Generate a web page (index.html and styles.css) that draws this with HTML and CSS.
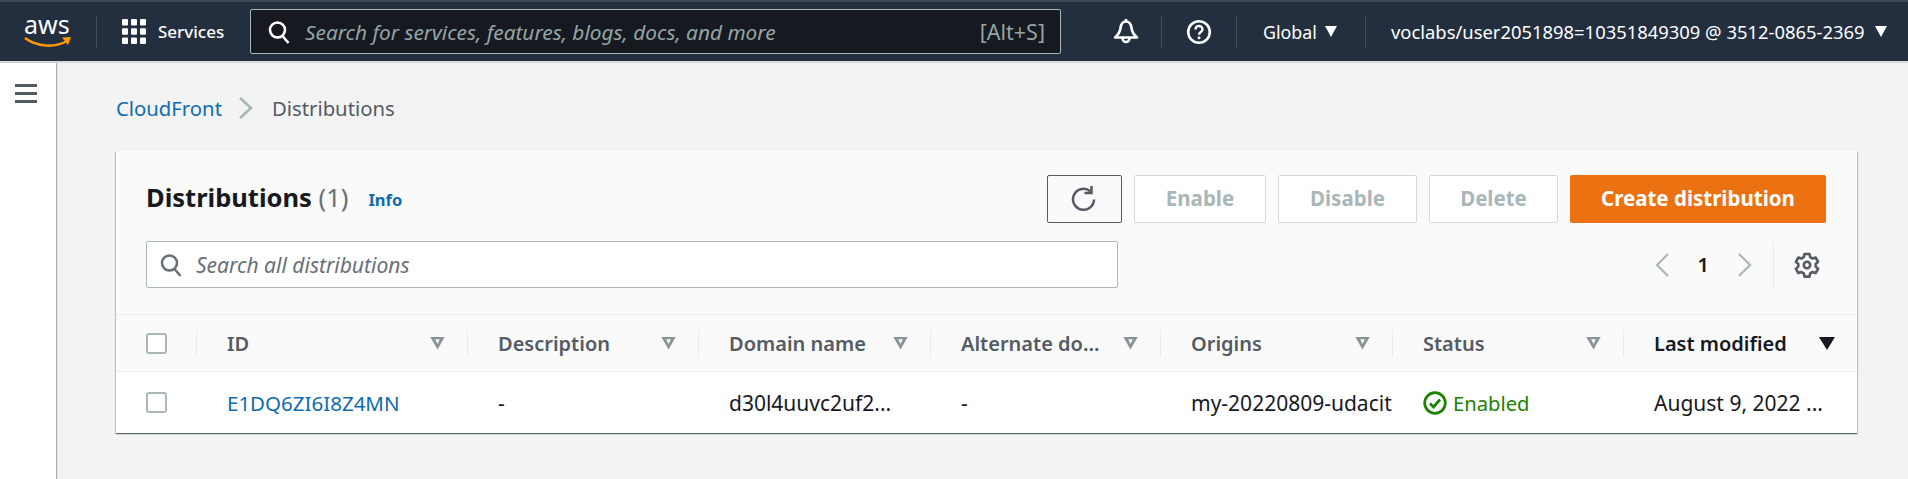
FILE: index.html
```html
<!DOCTYPE html>
<html lang="en">
<head>
  <meta charset="UTF-8" />
  <title>CloudFront Distributions</title>
  <link rel="stylesheet" href="styles.css">
</head>
<body>
  <header class="topbar">
    <div class="logo">
      <span class="logo-text">aws</span>
      <svg class="logo-smile" width="48" height="12" viewBox="0 0 48 12"><path d="M1 2c12 9 30 10 42 3" fill="none" stroke="#f90" stroke-width="2.6"/><path d="M38 1.500l9-.5-3 8z" fill="#f90"/></svg>
    </div>
    <div class="divider"></div>
    <div class="services">
      <svg width="24" height="25" viewBox="0 0 24 25" fill="#fff">
        <rect x="0" y="0" width="6" height="6.500" rx="1"/><rect x="9" y="0" width="6" height="6.500" rx="1"/><rect x="18" y="0" width="6" height="6.500" rx="1"/>
        <rect x="0" y="9.250" width="6" height="6.500" rx="1"/><rect x="9" y="9.250" width="6" height="6.500" rx="1"/><rect x="18" y="9.250" width="6" height="6.500" rx="1"/>
        <rect x="0" y="18.500" width="6" height="6.500" rx="1"/><rect x="9" y="18.500" width="6" height="6.500" rx="1"/><rect x="18" y="18.500" width="6" height="6.500" rx="1"/>
      </svg>
      <span>Services</span>
    </div>
    <div class="global-search">
      <svg width="22" height="24" viewBox="0 0 22 24" fill="none" stroke="#fff" stroke-width="2.600"><circle cx="9.500" cy="10" r="7.500"/><path d="M14.500 16l6 7"/></svg>
      <span class="global-placeholder">Search for services, features, blogs, docs, and more</span>
      <span class="shortcut">[Alt+S]</span>
    </div>
    <div class="tool bell">
      <svg width="26" height="27" viewBox="0 0 26 27" fill="none" stroke="#fff" stroke-width="2.600" stroke-linejoin="round"><path d="M13 3.500c-3.500 0-5 3-5.500 6.500-.5 4-2.500 7-5.500 9.500h22c-3-2.500-5-5.500-5.500-9.500-.5-3.500-2-6.500-5.500-6.500z"/><path d="M13 1v2"/><path d="M9.500 20a3.500 4 0 0 0 7 0"/></svg>
    </div>
    <div class="divider"></div>
    <div class="tool help">
      <svg width="26" height="26" viewBox="0 0 26 26" fill="none" stroke="#fff"><circle cx="13" cy="13" r="10.800" stroke-width="2.600"/><path d="M9.500 10.500c0-2.200 1.600-3.500 3.500-3.500s3.500 1.300 3.500 3.200c0 2.800-3.500 2.800-3.500 5.600" stroke-width="2.300"/><circle cx="13" cy="18.800" r="1.500" fill="#fff" stroke="none"/></svg>
    </div>
    <div class="divider"></div>
    <div class="menu region"><span>Global</span><i class="caret"></i></div>
    <div class="divider"></div>
    <div class="menu account"><span>voclabs/user2051898=10351849309 @ 3512-0865-2369</span><i class="caret"></i></div>
  </header>

  <div class="layout">
    <aside class="sidenav">
      <div class="hamburger"><i></i><i></i><i></i></div>
    </aside>
    <main class="content">
      <nav class="crumbs">
        <a href="#">CloudFront</a>
        <svg width="16" height="24" viewBox="0 0 16 24" fill="none" stroke="#aab7b8" stroke-width="2.600"><path d="M2 2l11 10L2 22"/></svg>
        <span>Distributions</span>
      </nav>

      <section class="card">
        <div class="card-head">
          <div class="head-row">
            <h1 class="title">Distributions <span class="count">(1)</span></h1>
            <a class="info" href="#">Info</a>
            <div class="actions">
              <button class="btn btn-refresh">
                <svg width="26" height="28" viewBox="0 0 26 28" fill="none" stroke="#545b64" stroke-width="2.500"><path d="M20.500 6.500a10.500 10.500 0 1 0 3.500 8"/><path d="M21.500 1v7h-7"/></svg>
              </button>
              <button class="btn btn-enable" disabled>Enable</button>
              <button class="btn btn-disable" disabled>Disable</button>
              <button class="btn btn-delete" disabled>Delete</button>
              <button class="btn btn-primary">Create distribution</button>
            </div>
          </div>
          <div class="filter-row">
            <div class="filter">
              <svg width="22" height="24" viewBox="0 0 22 24" fill="none" stroke="#687078" stroke-width="2.600"><circle cx="9.500" cy="10" r="7.500"/><path d="M14.500 16l6 7"/></svg>
              <span>Search all distributions</span>
            </div>
            <div class="pager">
              <svg width="14" height="26" viewBox="0 0 14 26" fill="none" stroke="#aab7b8" stroke-width="2.200"><path d="M13 2L2 13l11 11"/></svg>
              <span class="page-num">1</span>
              <svg width="14" height="26" viewBox="0 0 14 26" fill="none" stroke="#aab7b8" stroke-width="2.200"><path d="M1 2l11 11L1 24"/></svg>
            </div>
            <div class="prefs">
              <svg width="26" height="26" viewBox="0 0 26 26" fill="none" stroke="#545b64" stroke-width="2.600" stroke-linejoin="round"><path d="M10.500 2h5l.7 3.200 2.300 1.300 3.100-1 2.500 4.300-2.400 2.200v2.600l2.400 2.200-2.500 4.300-3.100-1-2.300 1.300-.7 3.200h-5l-.7-3.200-2.300-1.300-3.100 1-2.500-4.300 2.400-2.200v-2.600L1.900 9.800l2.500-4.300 3.100 1 2.300-1.300z"/><circle cx="13" cy="13" r="3.200"/></svg>
            </div>
          </div>
        </div>

        <div class="table">
          <div class="tr thead">
            <div class="cell cell-check"><i class="checkbox"></i></div>
            <div class="cell"><span class="label">ID</span><i class="sort"></i></div>
            <div class="cell"><span class="label">Description</span><i class="sort"></i></div>
            <div class="cell"><span class="label">Domain name</span><i class="sort"></i></div>
            <div class="cell"><span class="label">Alternate do...</span><i class="sort"></i></div>
            <div class="cell"><span class="label">Origins</span><i class="sort"></i></div>
            <div class="cell"><span class="label">Status</span><i class="sort"></i></div>
            <div class="cell cell-active"><span class="label">Last modified</span><i class="sort-down"></i></div>
          </div>
          <div class="tr tbody">
            <div class="cell cell-check"><i class="checkbox"></i></div>
            <div class="cell"><a href="#">E1DQ6ZI6I8Z4MN</a></div>
            <div class="cell">-</div>
            <div class="cell">d30l4uuvc2uf2...</div>
            <div class="cell">-</div>
            <div class="cell">my-20220809-udacit</div>
            <div class="cell status">
              <svg width="24" height="24" viewBox="0 0 24 24" fill="none" stroke="#1d8102" stroke-width="2.700"><circle cx="12" cy="12" r="10.300"/><path d="M7 12.500l3.500 3.500L17 8.500"/></svg>
              <span>Enabled</span>
            </div>
            <div class="cell">August 9, 2022 ...</div>
          </div>
        </div>
      </section>
    </main>
  </div>
</body>
</html>
```

FILE: styles.css
```css
html, body {
  margin: 0;
  padding: 0;
  height: 100%;
  overflow: hidden;
  font-family: "Noto Sans", sans-serif;
  background: #f3f3f3;
  color: #16191f;
}

/* top navigation */
.topbar {
  display: flex;
  align-items: center;
  height: 59px;
  background: #232f3e;
  border-top: 2px solid #414750;
  border-bottom: 2px solid #d5dbdb;
  color: #fff;
  box-sizing: content-box;
}
.divider {
  width: 1px;
  height: 33px;
  background: #414d5c;
  flex: none;
}
.logo {
  position: relative;
  width: 46px;
  height: 30px;
  margin: 0 26px 0 24px;
  flex: none;
}
.logo-text {
  position: absolute;
  left: 0;
  top: -8px;
  font-size: 25px;
  line-height: 30px;
}
.logo-smile {
  position: absolute;
  left: 0;
  bottom: -1px;
}
.services {
  display: flex;
  align-items: center;
  gap: 12px;
  width: 128px;
  margin-left: 25px;
  font-size: 17px;
  font-weight: 500;
  flex: none;
}
.global-search {
  display: flex;
  align-items: center;
  box-sizing: border-box;
  width: 811px;
  height: 45px;
  padding: 0 15px 0 17px;
  background: #16191f;
  border: 1px solid #aab7b8;
  border-radius: 2px;
  font-size: 20.800px;
  color: #95a5a6;
  flex: none;
}
.global-placeholder {
  margin-left: 15px;
  font-style: italic;
  flex: 1;
}
.shortcut {
  font-size: 21.500px;
}
.tool {
  display: flex;
  align-items: center;
  justify-content: center;
  flex: none;
}
.bell {
  width: 26px;
  margin: 0 22px 0 52px;
}
.help {
  width: 26px;
  margin: 0 24px 0 24px;
}
.menu {
  display: flex;
  align-items: center;
  font-size: 18.400px;
  white-space: nowrap;
  flex: none;
}
.region {
  width: 74px;
  margin: 0 28px 0 26px;
  gap: 8px;
  font-size: 17.800px;
}
.account {
  margin-left: 25px;
  gap: 10px;
}
.caret {
  width: 0;
  height: 0;
  border-left: 6px solid transparent;
  border-right: 6px solid transparent;
  border-top: 11px solid #fff;
}

/* page */
.layout {
  display: flex;
  height: 417px;
}
.sidenav {
  width: 56px;
  background: #fff;
  box-shadow: 1px 0 1px rgba(0, 28, 36, 0.3);
  flex: none;
}
.hamburger {
  display: flex;
  flex-direction: column;
  gap: 5px;
  margin: 21px 0 0 15px;
  width: 22px;
}
.hamburger i {
  height: 3px;
  background: #545b64;
}
.content {
  flex: 1;
  padding: 0 51px 0 60px;
}
.crumbs {
  display: flex;
  align-items: center;
  box-sizing: border-box;
  height: 88px;
  padding-top: 2px;
  font-size: 20.300px;
  color: #545b64;
}
.crumbs a {
  color: #0f6cb0;
  text-decoration: none;
}
.crumbs svg {
  margin: 0 18px 0 16px;
}

/* distributions card */
.card {
  background: #fff;
  box-shadow: 0 1px 1px 0 rgba(0, 28, 36, 0.5), 1px 1px 1px 0 rgba(0, 28, 36, 0.15), -1px 1px 1px 0 rgba(0, 28, 36, 0.15);
}
.card-head {
  background: #fafafa;
  padding: 24px 31px 26px 30px;
}
.head-row {
  display: flex;
  align-items: center;
  height: 48px;
}
.title {
  margin: -4px 0 0;
  font-size: 25.500px;
  font-weight: 700;
  white-space: nowrap;
}
.count {
  font-weight: 400;
  color: #687078;
}
.info {
  margin: 0 0 0 20px;
  font-size: 16.500px;
  font-weight: 700;
  color: #0f6cb0;
  text-decoration: none;
}
.actions {
  display: flex;
  gap: 12px;
  margin-left: auto;
}
.btn {
  height: 48px;
  padding: 0 0 2px;
  font-family: inherit;
  font-size: 20.500px;
  font-weight: 700;
  background: #fff;
  border: 1px solid #d5dbdb;
  border-radius: 2px;
  color: #aab7b8;
}
.btn-refresh {
  display: flex;
  align-items: center;
  justify-content: center;
  width: 75px;
  padding: 0 3px 0 0;
  background: #fafafa;
  border-color: #545b64;
}
.btn-enable { width: 132px; }
.btn-disable { width: 139px; }
.btn-delete { width: 129px; }
.btn-primary {
  width: 256px;
  background: #ec7211;
  border-color: #ec7211;
  color: #fff;
}
.filter-row {
  display: flex;
  align-items: center;
  margin-top: 18px;
  height: 47px;
}
.filter {
  display: flex;
  align-items: center;
  gap: 14px;
  box-sizing: border-box;
  width: 972px;
  height: 47px;
  padding-left: 13px;
  background: #fff;
  border: 1px solid #aab7b8;
  border-radius: 2px;
  font-size: 21px;
  font-style: italic;
  color: #687078;
}
.pager {
  display: flex;
  align-items: center;
  margin-left: auto;
  gap: 29px;
}
.page-num {
  font-size: 20px;
  font-weight: 600;
}
.prefs {
  display: flex;
  align-items: center;
  height: 47px;
  margin-left: 21px;
  padding: 0 6px 0 20px;
  border-left: 1px solid #eaeded;
}

/* table */
.tr {
  display: grid;
  grid-template-columns: 80px 271px 231px 232px 230px 232px 231px 234px;
}
.thead {
  height: 56px;
  background: #fafafa;
  border-top: 1px solid #eaeded;
  border-bottom: 1px solid #eaeded;
  font-weight: 600;
  color: #545b64;
}
.tbody {
  height: 61px;
  background: #fff;
}
.cell {
  display: flex;
  align-items: center;
  padding: 0 22px 0 31px;
  font-size: 21px;
  white-space: nowrap;
  min-width: 0;
}
.thead .cell {
  position: relative;
  justify-content: space-between;
  font-size: 20px;
}
.thead .cell::before {
  content: "";
  position: absolute;
  left: 0;
  top: 14px;
  bottom: 14px;
  width: 1px;
  background: #eaeded;
}
.thead .cell-check::before {
  display: none;
}
.cell-check {
  padding: 0 0 0 30px;
}
.cell-active {
  color: #16191f;
}
.cell a {
  color: #0f6cb0;
  font-size: 20.500px;
  text-decoration: none;
}
.checkbox {
  display: block;
  box-sizing: border-box;
  width: 21px;
  height: 21px;
  background: #fff;
  border: 2px solid #aab7b8;
  border-radius: 3px;
}
.sort {
  position: relative;
  width: 15px;
  height: 13px;
  clip-path: polygon(0 0, 100% 0, 50% 100%);
  background: #879596;
}
.sort::after {
  content: "";
  position: absolute;
  left: 0;
  top: 0;
  width: 100%;
  height: 100%;
  background: #fafafa;
  clip-path: polygon(34% 22%, 66% 22%, 50% 58%);
}
.sort-down {
  width: 0;
  height: 0;
  border-left: 8px solid transparent;
  border-right: 8px solid transparent;
  border-top: 13px solid #16191f;
}
.status {
  gap: 6px;
  color: #1d8102;
  font-size: 20.200px;
}
```
